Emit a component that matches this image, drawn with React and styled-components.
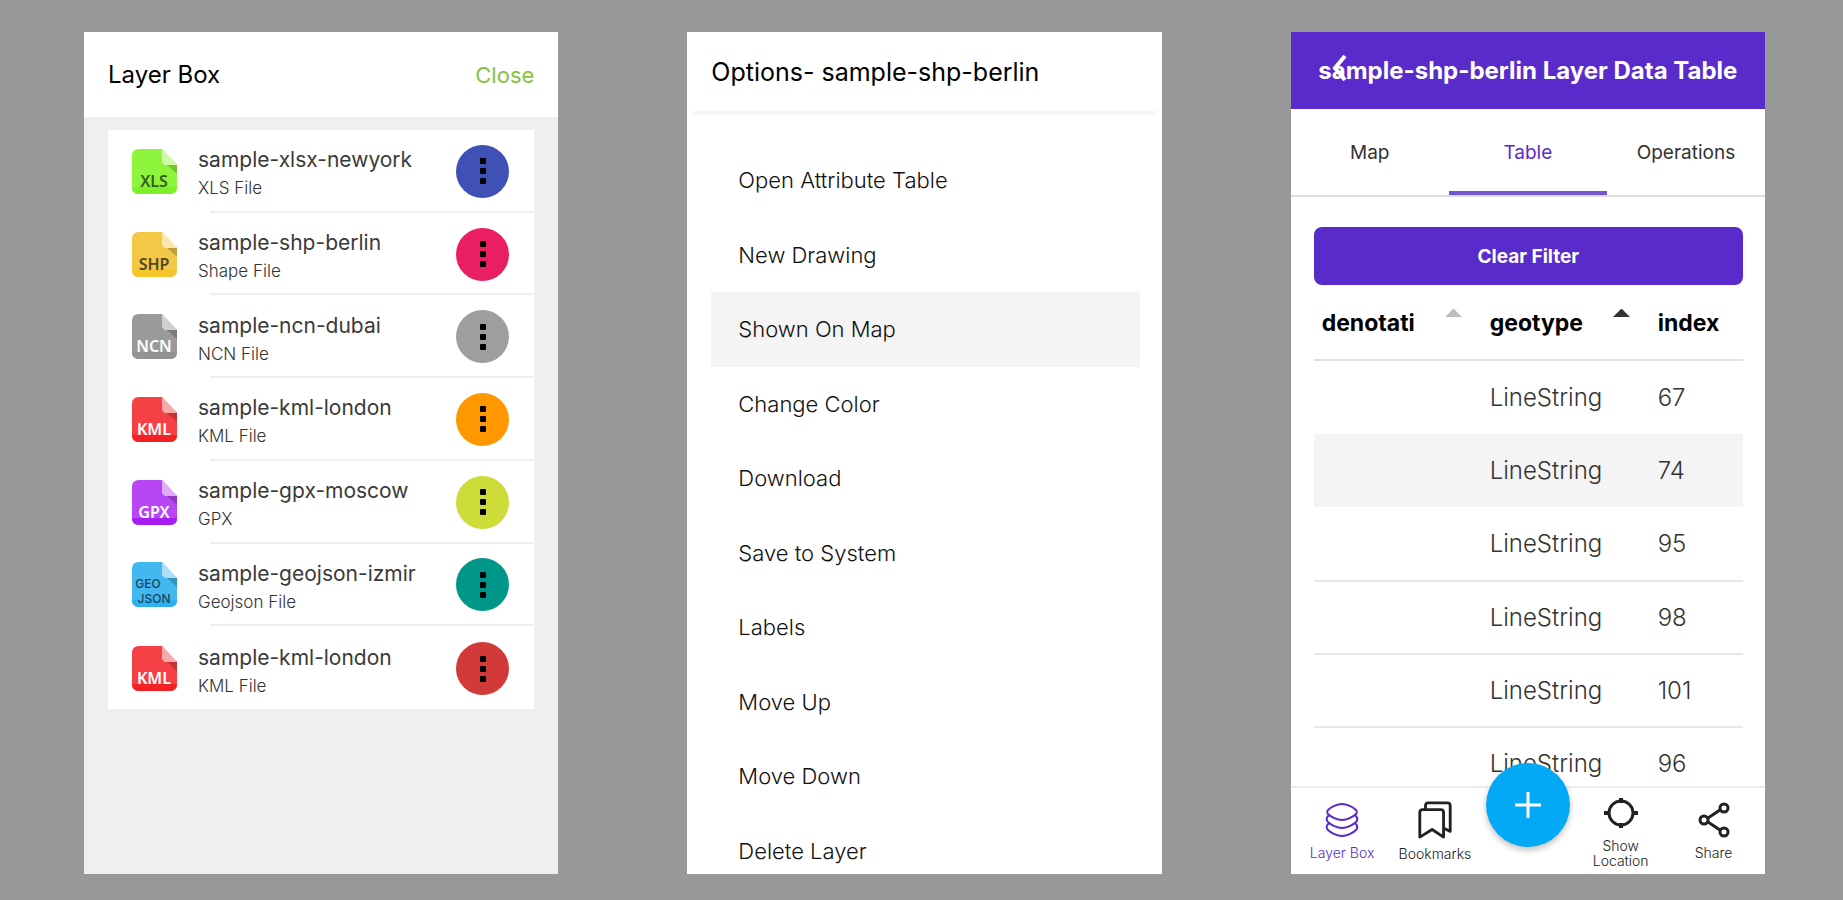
import React, { useState } from 'react';
import styled, { createGlobalStyle } from 'styled-components';

const purple = '#5a2bcb';

const GlobalStyle = createGlobalStyle`
  * { box-sizing: border-box; }
  body {
    margin: 0;
    background: #989898;
    font-family: Inter, "Liberation Sans", sans-serif;
    color: #000;
  }
  button {
    border: 0;
    padding: 0;
    background: none;
    font: inherit;
    color: inherit;
    cursor: pointer;
  }
  ul, h2 { margin: 0; padding: 0; list-style: none; }
`;

const Screens = styled.main`
  display: grid;
  grid-template-columns: repeat(3, minmax(0, 1fr));
  gap: 129px;
  height: 100vh;
  padding: 32px 78px 26px 84px;
`;

const Panel = styled.section`
  display: flex;
  flex-direction: column;
  min-height: 0;
  overflow: hidden;
  background: ${(p) => p.$bg || '#fff'};
`;

const PanelHeader = styled.header`
  flex: none;
  display: flex;
  align-items: center;
  justify-content: space-between;
  height: ${(p) => p.$height}px;
  padding: 0 24px;
  background: #fff;
`;

const Title = styled.h2`
  font-size: ${(p) => p.$size || 24}px;
  font-weight: 400;
  line-height: 32px;
`;

const CloseButton = styled.button`
  font-size: 22px;
  line-height: 32px;
  color: #84c341;
`;

/* Layer list */

const LayerList = styled.ul`
  flex: none;
  display: grid;
  grid-auto-rows: 1fr;
  min-height: 579px;
  margin: 13px 24px 0;
  background: #fff;
`;

const LayerItem = styled.li`
  display: flex;
  flex-direction: column;
  &:not(:last-child)::after {
    content: '';
    height: 2px;
    margin-left: 102px;
    background: #efefef;
  }
`;

const LayerRow = styled.div`
  flex: 1;
  display: flex;
  align-items: center;
  padding: 2px 25px 0 24px;
`;

const LayerText = styled.div`
  flex: 1;
  min-width: 0;
  margin-left: 21px;
  padding-top: 6px;
  line-height: 29px;
  white-space: nowrap;
`;

const LayerName = styled.div`
  font-size: 21px;
  color: #3a3a3a;
`;

const LayerKind = styled.div`
  font-size: 17px;
  font-weight: 300;
  color: #333;
`;

const MoreButton = styled.button`
  flex: none;
  display: grid;
  place-items: center;
  width: 53px;
  height: 53px;
  border-radius: 50%;
  background: ${(p) => p.$color};
`;

/* Options menu */

const Divider = styled.div`
  flex: none;
  height: 4px;
  margin: 0 4px 0 6px;
  background: #f7f7f7;
`;

const OptionList = styled.ul`
  flex: none;
  display: grid;
  grid-auto-rows: 1fr;
  min-height: 745px;
  margin: 28px 22px 0 24px;
`;

const Option = styled.button`
  width: 100%;
  height: 100%;
  padding-left: 27px;
  text-align: left;
  font-size: 22px;
  font-weight: 300;
  color: #111;
  background: ${(p) => (p.$active ? '#f4f4f4' : 'transparent')};
`;

/* Data table screen */

const AppBar = styled.header`
  flex: none;
  position: relative;
  display: flex;
  align-items: center;
  justify-content: center;
  height: 77px;
  background: ${purple};
  color: #fff;
`;

const AppTitle = styled.h2`
  font-size: 24px;
  font-weight: 700;
  line-height: 32px;
  white-space: nowrap;
`;

const BackButton = styled.button`
  position: absolute;
  top: 21px;
  left: 40px;
  width: 16px;
  height: 30px;
`;

const Tabs = styled.div`
  flex: none;
  display: grid;
  grid-template-columns: repeat(3, 1fr);
  height: 88px;
  border-bottom: 2px solid #dcdcdc;
`;

const Tab = styled.button`
  padding-top: 4px;
  font-size: 19px;
  border-bottom: 4px solid ${(p) => (p.$active ? '#7455d3' : 'transparent')};
  color: ${(p) => (p.$active ? purple : '#333')};
`;

const TableArea = styled.div`
  flex: 1;
  min-height: 0;
  overflow: hidden;
  padding: 30px 22px 0 23px;
`;

const FilterButton = styled.button`
  display: block;
  width: 100%;
  height: 58px;
  border-radius: 8px;
  background: ${purple};
  color: #fff;
  font-size: 19px;
  font-weight: 700;
`;

const DataTable = styled.table`
  width: 100%;
  table-layout: fixed;
  border-collapse: separate;
  border-spacing: 0;
`;

const HeadCell = styled.th`
  width: ${(p) => p.$width || 'auto'};
  height: 76px;
  padding: 2px 20px 0 8px;
  border-bottom: 2px solid #e0e2e4;
  text-align: left;
  font-size: 23px;
  font-weight: 700;
`;

const HeadContent = styled.div`
  display: flex;
  align-items: center;
  justify-content: space-between;
`;

const SortArrow = styled.svg`
  flex: none;
  margin-bottom: 20px;
`;

const BodyRow = styled.tr`
  background: ${(p) => (p.$active ? '#f4f4f4' : 'transparent')};
  & + & > td { border-top: 2px solid #e8e8e8; }
`;

const Cell = styled.td`
  height: 73px;
  padding: 0 0 0 8px;
  font-size: 24px;
  font-weight: 300;
  color: #333;
`;

const BottomNav = styled.nav`
  flex: none;
  position: relative;
  display: grid;
  grid-template-columns: repeat(5, 1fr);
  height: 88px;
  padding: 0 5px;
  border-top: 2px solid #ececec;
  background: #fff;
`;

const NavItem = styled.button`
  display: flex;
  flex-direction: column;
  align-items: center;
  justify-content: center;
  gap: 7px;
  color: ${(p) => (p.$active ? purple : '#222')};
  font-size: 14px;
  font-weight: 300;
  line-height: 15px;
`;

const AddButton = styled.button`
  justify-self: center;
  display: grid;
  place-items: center;
  width: 84px;
  height: 84px;
  margin-top: -25px;
  border-radius: 50%;
  background: #03a9f4;
  box-shadow: 0 3px 6px rgba(0, 0, 0, 0.25);
`;

const layers = [
  { name: 'sample-xlsx-newyork', kind: 'XLS File', tag: ['XLS'], top: '#8ff53c', base: '#7ef028', ink: '#33601a', color: '#3f51b5' },
  { name: 'sample-shp-berlin', kind: 'Shape File', tag: ['SHP'], top: '#f2c846', base: '#f5c52c', ink: '#4f4a22', color: '#e91e63' },
  { name: 'sample-ncn-dubai', kind: 'NCN File', tag: ['NCN'], top: '#9a9a9a', base: '#929292', ink: '#fff', color: '#9e9e9e' },
  { name: 'sample-kml-london', kind: 'KML File', tag: ['KML'], top: '#f54145', base: '#f32024', ink: '#fff', color: '#ff9800' },
  { name: 'sample-gpx-moscow', kind: 'GPX', tag: ['GPX'], top: '#b846f5', base: '#a51df0', ink: '#fff', color: '#cddc39' },
  { name: 'sample-geojson-izmir', kind: 'Geojson File', tag: ['GEO', 'JSON'], top: '#43b7f0', base: '#2fb0f2', ink: '#17465f', color: '#009688' },
  { name: 'sample-kml-london', kind: 'KML File', tag: ['KML'], top: '#f54145', base: '#f32024', ink: '#fff', color: '#d23a3a' },
];

const options = [
  'Open Attribute Table', 'New Drawing', 'Shown On Map', 'Change Color', 'Download',
  'Save to System', 'Labels', 'Move Up', 'Move Down', 'Delete Layer',
];

const rows = [67, 74, 95, 98, 101, 96];

function FileIcon({ layer }) {
  const two = layer.tag.length === 2;
  return (
    <svg width="45" height="45" viewBox="0 0 45 45" aria-hidden="true">
      <path d="M7 0H30L45 16V38Q45 45 38 45H7Q0 45 0 38V7Q0 0 7 0Z" fill={layer.top} />
      <path d="M0 38H45Q45 45 38 45H7Q0 45 0 38Z" fill={layer.base} />
      <path d="M34 15H45V25Z" fill="#000" opacity="0.2" />
      <path d="M30 0L45 16H35Q30 16 30 11Z" fill="#fff" />
      <path d="M30 0L45 16H35Q30 16 30 11Z" fill={layer.top} opacity="0.45" />
      {layer.tag.map((line, i) => (
        <text
          key={line}
          x={two && i === 0 ? 16 : 22}
          y={two ? 26 + i * 15 : 38}
          textAnchor="middle"
          fontFamily={two ? 'Inter, sans-serif' : '"Noto Sans", sans-serif'}
          fontWeight={two ? 500 : 600}
          fontSize={two ? 12 : 16}
          fill={layer.ink}
        >
          {line}
        </text>
      ))}
    </svg>
  );
}

function Dots() {
  return (
    <svg width="8" height="28" viewBox="0 0 8 28" aria-hidden="true">
      <rect x="1" y="1" width="6" height="6" rx="1" />
      <rect x="1" y="11" width="6" height="6" rx="1" />
      <rect x="1" y="21" width="6" height="6" rx="1" />
    </svg>
  );
}

const Arrow = ({ fill }) => (
  <SortArrow width="17" height="8" viewBox="0 0 17 8" aria-hidden="true">
    <path d="M0 8L8 0H9L17 8Z" fill={fill} />
  </SortArrow>
);

const LayersIcon = () => (
  <svg width="34" height="36" viewBox="0 0 34 36" fill="none" stroke="currentColor" strokeWidth="2" strokeLinejoin="round" aria-hidden="true">
    <path d="M17 2C22 2 28 5 31 8C32 9 32 11 31 12C28 15 22 18 17 18C12 18 6 15 3 12C2 11 2 9 3 8C6 5 12 2 17 2Z" />
    <path d="M4 13C1 16 1 18 3 20C6 23 12 26 17 26C22 26 28 23 31 20C33 18 33 16 30 13" />
    <path d="M4 21C1 24 1 26 3 28C6 31 12 34 17 34C22 34 28 31 31 28C33 26 33 24 30 21" />
  </svg>
);

const BookmarksIcon = () => (
  <svg width="36" height="38" viewBox="0 0 36 40" fill="none" stroke="currentColor" strokeLinejoin="round" aria-hidden="true">
    <path d="M8 9V5Q8 2 11 2H31Q34 2 34 5V32L28 29" strokeWidth="3" />
    <path d="M2 12Q2 9 5 9H24Q27 9 27 12V38L15 30L2 38Z" strokeWidth="3" />
  </svg>
);

const TargetIcon = () => (
  <svg width="36" height="36" viewBox="0 0 36 36" fill="none" stroke="currentColor" aria-hidden="true">
    <circle cx="18" cy="18" r="12" strokeWidth="3" />
    <path d="M18 3V8M18 28V33M1 18H7M29 18H35" strokeWidth="4" />
  </svg>
);

const ShareIcon = () => (
  <svg width="32" height="36" viewBox="0 0 32 36" fill="none" stroke="currentColor" strokeWidth="3" aria-hidden="true">
    <circle cx="26" cy="6" r="4" />
    <circle cx="6" cy="18" r="4" />
    <circle cx="26" cy="30" r="4" />
    <path d="M10 16L22 8M10 20L22 28" />
  </svg>
);

function LayerBoxPanel() {
  return (
    <Panel $bg="#efefef">
      <PanelHeader $height={85}>
        <Title>Layer Box</Title>
        <CloseButton type="button">Close</CloseButton>
      </PanelHeader>
      <LayerList>
        {layers.map((layer, i) => (
          <LayerItem key={i}>
            <LayerRow>
              <FileIcon layer={layer} />
              <LayerText>
                <LayerName>{layer.name}</LayerName>
                <LayerKind>{layer.kind}</LayerKind>
              </LayerText>
              <MoreButton type="button" aria-label="More" $color={layer.color}>
                <Dots />
              </MoreButton>
            </LayerRow>
          </LayerItem>
        ))}
      </LayerList>
    </Panel>
  );
}

function OptionsPanel() {
  const [active, setActive] = useState('Shown On Map');
  return (
    <Panel>
      <PanelHeader $height={79}>
        <Title $size={25}>Options- sample-shp-berlin</Title>
      </PanelHeader>
      <Divider />
      <OptionList>
        {options.map((label) => (
          <li key={label}>
            <Option type="button" $active={label === active} onClick={() => setActive(label)}>
              {label}
            </Option>
          </li>
        ))}
      </OptionList>
    </Panel>
  );
}

function DataTablePanel() {
  const [tab, setTab] = useState('Table');
  return (
    <Panel>
      <AppBar>
        <AppTitle>sample-shp-berlin Layer Data Table</AppTitle>
        <BackButton type="button" aria-label="Back">
          <svg width="16" height="30" viewBox="0 0 16 30" fill="none" stroke="#fff" strokeWidth="4" aria-hidden="true">
            <path d="M14 3L4 15L14 27" />
          </svg>
        </BackButton>
      </AppBar>
      <Tabs role="tablist">
        {['Map', 'Table', 'Operations'].map((label) => (
          <Tab key={label} type="button" role="tab" aria-selected={tab === label} $active={tab === label} onClick={() => setTab(label)}>
            {label}
          </Tab>
        ))}
      </Tabs>
      <TableArea>
        <FilterButton type="button">Clear Filter</FilterButton>
        <DataTable>
          <thead>
            <tr>
              <HeadCell $width="168px">
                <HeadContent>denotati<Arrow fill="#bdbdbd" /></HeadContent>
              </HeadCell>
              <HeadCell $width="168px">
                <HeadContent>geotype<Arrow fill="#333" /></HeadContent>
              </HeadCell>
              <HeadCell>index</HeadCell>
            </tr>
          </thead>
          <tbody>
            {rows.map((n) => (
              <BodyRow key={n} $active={n === 74}>
                <Cell />
                <Cell>LineString</Cell>
                <Cell>{n}</Cell>
              </BodyRow>
            ))}
          </tbody>
        </DataTable>
      </TableArea>
      <BottomNav>
        <NavItem type="button" $active><LayersIcon />Layer Box</NavItem>
        <NavItem type="button"><BookmarksIcon />Bookmarks</NavItem>
        <AddButton type="button" aria-label="Add">
          <svg width="26" height="26" viewBox="0 0 26 26" stroke="#fff" strokeWidth="3" aria-hidden="true">
            <path d="M13 0V26M0 13H26" />
          </svg>
        </AddButton>
        <NavItem type="button"><TargetIcon /><span>Show<br />Location</span></NavItem>
        <NavItem type="button"><ShareIcon />Share</NavItem>
      </BottomNav>
    </Panel>
  );
}

export default function App() {
  return (
    <>
      <GlobalStyle />
      <Screens>
        <LayerBoxPanel />
        <OptionsPanel />
        <DataTablePanel />
      </Screens>
    </>
  );
}
